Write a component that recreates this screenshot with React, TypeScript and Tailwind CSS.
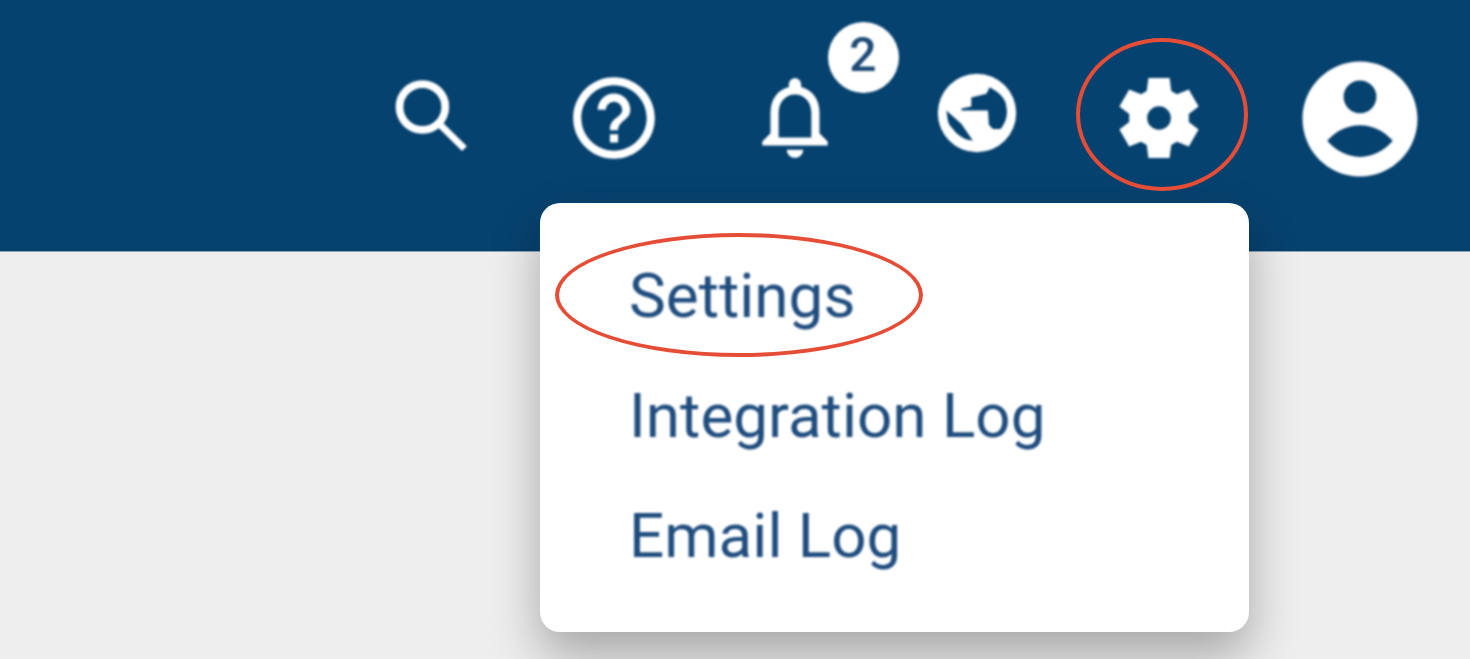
import { MdHelpOutline, MdOutlineNotifications } from "react-icons/md";

const menuItems = ["Settings", "Integration Log", "Email Log"];

function SearchIcon() {
  return (
    <svg viewBox="0 0 24 24" className="h-[98px] w-[98px] blur-[1px]" fill="none" stroke="currentColor">
      <circle cx="9.4" cy="9.3" r="5.6" strokeWidth="1.9" />
      <path d="M13.6 13.5L19.7 19.5" strokeWidth="1.7" />
    </svg>
  );
}

function GlobeIcon() {
  return (
    <svg viewBox="0 0 24 24" className="mb-[10px] h-[98px] w-[98px] blur-[1px]" fill="currentColor">
      <path
        fillRule="evenodd"
        d="M12 2.4a9.6 9.6 0 1 0 0 19.2 9.6 9.6 0 0 0 0-19.2zM15.1 5.7C17.4 6.9 19.2 8.6 19.2 10.6C19.6 12.6 19 14.4 17.8 15.9H15.9L14.9 14.9L14.7 11.4H8.2V10.9L10.6 10.4V8.2L14.3 7.3zM4.5 11.4L8.2 14.7L11 18.8L9.4 18.5C8 17.9 6.9 17 6.1 15.9C5.4 15.2 4.9 14.4 4.8 13.5z"
      />
    </svg>
  );
}

function GearIcon() {
  return (
    <svg viewBox="0 0 24 24" className="h-[98px] w-[98px] blur-[1px]" fill="currentColor">
      <path
        fillRule="evenodd"
        d="M9.4 2.2H14.6L15 5.4L16.4 6.2L19.3 5L21.7 9.2L19.3 11V13L21.7 14.8L19.3 19L16.4 17.8L15 18.6L14.6 21.8H9.4L9 18.6L7.6 17.8L4.7 19L2.3 14.8L4.7 13V11L2.3 9.2L4.7 5L7.6 6.2L9 5.4zM12 9.1a2.9 2.9 0 1 0 0 5.8 2.9 2.9 0 0 0 0-5.8z"
      />
    </svg>
  );
}

function AccountIcon() {
  return (
    <svg viewBox="0 0 24 24" className="mt-[2px] h-[138px] w-[138px] blur-[1px]" fill="currentColor">
      <path
        fillRule="evenodd"
        d="M12 2C6.48 2 2 6.48 2 12s4.48 10 10 10 10-4.48 10-10S17.52 2 12 2zM12 5.3a2.85 2.85 0 1 1 0 5.7 2.85 2.85 0 0 1 0-5.7zM6.3 15.8C7.6 14.3 9.6 13.1 12 13.1s4.4 1.2 5.7 2.7C16.4 17.3 14.4 18.6 12 18.6s-4.4-1.3-5.7-2.8z"
      />
    </svg>
  );
}

export default function App() {
  return (
    <div className="relative h-screen overflow-hidden bg-[#eeeeee] font-['Roboto',sans-serif]">
      {/* Barre du haut */}
      <header className="flex h-[252px] items-center justify-end gap-[83.5px] border-b border-[#8fa3b5] bg-[#06426f] pb-[15px] pr-[41px] text-white">
        <SearchIcon />
        <MdHelpOutline className="h-[98px] w-[98px] blur-[1px]" />
        <div className="relative h-[98px] w-[98px]">
          <MdOutlineNotifications className="h-[98px] w-[98px] -translate-x-px -translate-y-px blur-[1px]" />
          <span className="absolute left-[81px] top-[-47px] flex h-[71px] w-[71px] items-center justify-center rounded-full bg-white pb-[6px] text-[48px] font-medium text-[#1d4a76] blur-[0.8px]">
            2
          </span>
        </div>
        <GlobeIcon />
        <GearIcon />
        <AccountIcon />
      </header>

      {/* Menu déroulant */}
      <div className="absolute left-[540px] top-[203px] w-[709px] rounded-[20px] bg-white pb-[36px] pl-[89px] pt-[33px] shadow-[0_24px_50px_rgba(0,0,0,0.3)]">
        {menuItems.map((item) => (
          <div key={item} className="h-[120px] text-[62px] leading-[120px] text-[#1f4d7e] blur-[0.8px]">
            {item}
          </div>
        ))}
      </div>

      {/* Annotations rouges */}
      <div className="absolute left-[1076px] top-[38px] h-[153px] w-[172px] rounded-[50%] border-4 border-[#e54d36]" />
      <div className="absolute left-[555px] top-[233px] h-[124px] w-[368px] rounded-[50%] border-4 border-[#e54d36]" />
    </div>
  );
}
